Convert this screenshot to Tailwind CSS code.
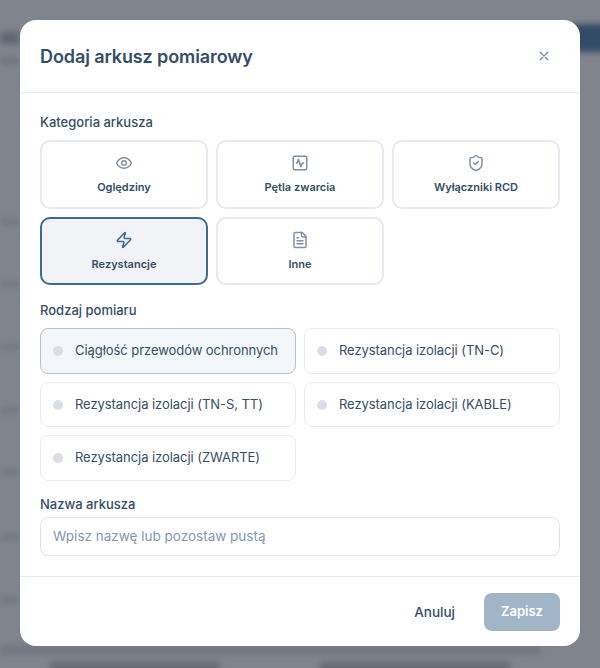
<!DOCTYPE html>
<html lang="pl">
<head>
<meta charset="utf-8">
<script src="https://cdn.jsdelivr.net/npm/@tailwindcss/browser@4"></script>
<title>Dodaj arkusz pomiarowy</title>
</head>
<body class="font-['Inter','Liberation_Sans',sans-serif]">
<div class="relative w-[600px] h-[668px] overflow-hidden bg-[#80858d] flex items-start justify-center pt-5">
  <div class="absolute inset-0 blur-[3px]" aria-hidden="true">
    <div class="absolute left-0 top-[32px] w-5 h-3 bg-[#5f6670]"></div>
    <div class="absolute left-0 top-[58px] w-5 h-[6px] bg-[#6c727b]"></div>
    <div class="absolute left-0 top-[220px] w-5 h-1 bg-[#69707a]"></div>
    <div class="absolute left-0 top-[282px] w-5 h-1 bg-[#6c727b]"></div>
    <div class="absolute left-0 top-[345px] w-5 h-1 bg-[#6c727b]"></div>
    <div class="absolute left-0 top-[408px] w-5 h-1 bg-[#6c727b]"></div>
    <div class="absolute left-0 top-[470px] w-5 h-1 bg-[#6c727b]"></div>
    <div class="absolute left-0 top-[535px] w-5 h-1 bg-[#69707a]"></div>
    <div class="absolute left-0 top-[598px] w-5 h-1 bg-[#69707a]"></div>
    <div class="absolute -right-3 top-[24px] w-10 h-[28px] bg-[#344b68]"></div>
    <div class="absolute left-0 right-[60px] top-[646px] h-2 bg-[#6f757c]"></div>
    <div class="absolute left-[50px] top-[662px] w-[170px] h-3 bg-[#646b75]"></div>
    <div class="absolute left-[320px] top-[662px] w-[190px] h-3 bg-[#646b75]"></div>
  </div>

  <div class="relative w-[560px] h-[626px] bg-white rounded-2xl flex flex-col text-[#334e68]">
    <header class="h-[73px] shrink-0 border-b border-[#e6ebf3] px-5 flex items-center justify-between">
      <h1 class="text-[18px] font-semibold text-[#334e68] tracking-[-0.1px]">Dodaj arkusz pomiarowy</h1>
      <button class="w-6 h-6 mr-1 flex items-center justify-center text-[#6f85a0]" aria-label="Zamknij">
        <svg class="w-4 h-4" viewBox="0 0 24 24" fill="none" stroke="currentColor" stroke-width="1.6" stroke-linecap="round"><path d="M6 6l12 12M18 6 6 18"/></svg>
      </button>
    </header>

    <div class="flex-1 px-5 pt-[21px]">
      <div class="text-[13px] leading-4 font-medium mb-[10px]">Kategoria arkusza</div>
      <div class="grid grid-cols-3 gap-2">
        <button class="h-[69px] rounded-[10px] border-2 border-[#e4e9f3] bg-white flex flex-col items-center pt-[12px] gap-[7px]">
          <svg class="w-[18px] h-[18px] text-[#7d90aa]" viewBox="0 0 24 24" fill="none" stroke="currentColor" stroke-width="2" stroke-linecap="round" stroke-linejoin="round"><path d="M2 12s3.6-7 10-7 10 7 10 7-3.6 7-10 7-10-7-10-7Z"/><circle cx="12" cy="12" r="3"/></svg>
          <span class="text-[11px] leading-4 font-semibold">Oględziny</span>
        </button>
        <button class="h-[69px] rounded-[10px] border-2 border-[#e4e9f3] bg-white flex flex-col items-center pt-[12px] gap-[7px]">
          <svg class="w-[18px] h-[18px] text-[#7d90aa]" viewBox="0 0 24 24" fill="none" stroke="currentColor" stroke-width="2" stroke-linecap="round" stroke-linejoin="round"><rect x="3" y="3" width="18" height="18" rx="2"/><path d="M17 12h-2l-2 5-3-10-2 5H7"/></svg>
          <span class="text-[11px] leading-4 font-semibold">Pętla zwarcia</span>
        </button>
        <button class="h-[69px] rounded-[10px] border-2 border-[#e4e9f3] bg-white flex flex-col items-center pt-[12px] gap-[7px]">
          <svg class="w-[18px] h-[18px] text-[#7d90aa]" viewBox="0 0 24 24" fill="none" stroke="currentColor" stroke-width="2" stroke-linecap="round" stroke-linejoin="round"><path d="M20 13c0 5-3.5 7.5-7.66 8.95a1 1 0 0 1-.67-.01C7.5 20.5 4 18 4 13V6a1 1 0 0 1 1-1c2 0 4.5-1.2 6.24-2.72a1.17 1.17 0 0 1 1.52 0C14.51 3.81 17 5 19 5a1 1 0 0 1 1 1z"/><path d="m9 12 2 2 4-4"/></svg>
          <span class="text-[11px] leading-4 font-semibold">Wyłączniki RCD</span>
        </button>
        <button class="h-[68px] rounded-[10px] border-2 border-[#3e6a94] bg-[#f1f3f7] flex flex-col items-center pt-[12px] gap-[7px]">
          <svg class="w-[18px] h-[18px] text-[#3e6a94]" viewBox="0 0 24 24" fill="none" stroke="currentColor" stroke-width="2" stroke-linecap="round" stroke-linejoin="round"><path d="M4 14a1 1 0 0 1-.78-1.63l9.9-10.2a.5.5 0 0 1 .86.46l-1.92 6.02A1 1 0 0 0 13 10h7a1 1 0 0 1 .78 1.63l-9.9 10.2a.5.5 0 0 1-.86-.46l1.92-6.02A1 1 0 0 0 11 14z"/></svg>
          <span class="text-[11px] leading-4 font-semibold">Rezystancje</span>
        </button>
        <button class="h-[68px] rounded-[10px] border-2 border-[#e4e9f3] bg-white flex flex-col items-center pt-[12px] gap-[7px]">
          <svg class="w-[18px] h-[18px] text-[#7d90aa]" viewBox="0 0 24 24" fill="none" stroke="currentColor" stroke-width="2" stroke-linecap="round" stroke-linejoin="round"><path d="M15 2H6a2 2 0 0 0-2 2v16a2 2 0 0 0 2 2h12a2 2 0 0 0 2-2V7Z"/><path d="M14 2v4a2 2 0 0 0 2 2h4"/><path d="M10 9H8M16 13H8M16 17H8"/></svg>
          <span class="text-[11px] leading-4 font-semibold">Inne</span>
        </button>
      </div>

      <div class="text-[13px] leading-4 font-medium mt-[17px] mb-[10px]">Rodzaj pomiaru</div>
      <div class="grid grid-cols-2 gap-x-2 gap-y-2">
        <div class="h-[46px] rounded-lg border border-[#b4c3d2] bg-[#f3f7fb] flex items-center pl-3 gap-3 text-[13px] tracking-[-0.06px]"><span class="w-[10px] h-[10px] rounded-full bg-[#d9dee8]"></span>Ciągłość przewodów ochronnych</div>
        <div class="h-[46px] rounded-lg border border-[#e8ecf4] flex items-center pl-3 gap-3 text-[13px] tracking-[-0.06px]"><span class="w-[10px] h-[10px] rounded-full bg-[#d9dee8]"></span>Rezystancja izolacji (TN-C)</div>
        <div class="h-[45px] rounded-lg border border-[#e8ecf4] flex items-center pl-3 gap-3 text-[13px] tracking-[-0.06px]"><span class="w-[10px] h-[10px] rounded-full bg-[#d9dee8]"></span>Rezystancja izolacji (TN-S, TT)</div>
        <div class="h-[45px] rounded-lg border border-[#e8ecf4] flex items-center pl-3 gap-3 text-[13px] tracking-[-0.06px]"><span class="w-[10px] h-[10px] rounded-full bg-[#d9dee8]"></span>Rezystancja izolacji (KABLE)</div>
        <div class="h-[46px] rounded-lg border border-[#e8ecf4] flex items-center pl-3 gap-3 text-[13px] tracking-[-0.06px]"><span class="w-[10px] h-[10px] rounded-full bg-[#d9dee8]"></span>Rezystancja izolacji (ZWARTE)</div>
      </div>

      <div class="text-[13px] leading-4 font-medium mt-[15px] mb-[5px]">Nazwa arkusza</div>
      <div class="h-[39px] rounded-lg border border-[#dfe3ec] flex items-center pl-3 text-[13.5px] text-[#8298b0]">Wpisz nazwę lub pozostaw pustą</div>
    </div>

    <footer class="h-[70px] shrink-0 border-t border-[#e6ebf3] px-5 flex items-start justify-end pt-4">
      <button class="h-[38px] text-[13.5px] font-medium text-[#334e68] mr-[29px]">Anuluj</button>
      <button class="h-[38px] w-[76px] rounded-lg bg-[#a2b5c8] text-white text-[13px] font-semibold">Zapisz</button>
    </footer>
  </div>
</div>
</body>
</html>
